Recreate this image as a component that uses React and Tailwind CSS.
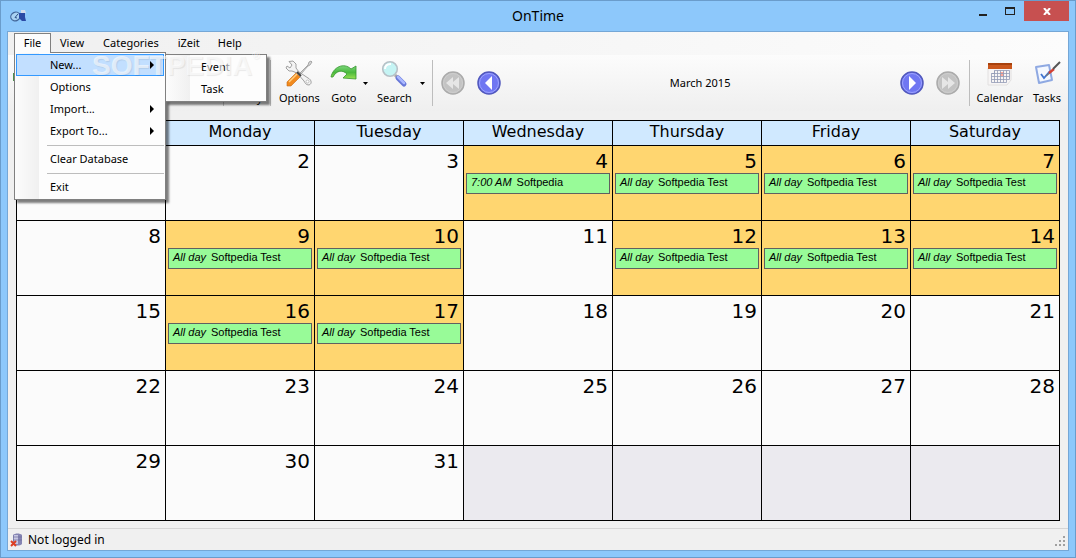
const WEEKDAYS = ["Sunday", "Monday", "Tuesday", "Wednesday", "Thursday", "Friday", "Saturday"];

const EVENTS = {
  4: { time: "7:00 AM", title: "Softpedia" },
  5: { time: "All day", title: "Softpedia Test" },
  6: { time: "All day", title: "Softpedia Test" },
  7: { time: "All day", title: "Softpedia Test" },
  9: { time: "All day", title: "Softpedia Test" },
  10: { time: "All day", title: "Softpedia Test" },
  12: { time: "All day", title: "Softpedia Test" },
  13: { time: "All day", title: "Softpedia Test" },
  14: { time: "All day", title: "Softpedia Test" },
  16: { time: "All day", title: "Softpedia Test" },
  17: { time: "All day", title: "Softpedia Test" },
};

const WEEKS = [0, 1, 2, 3, 4].map((week) => [1, 2, 3, 4, 5, 6, 7].map((day) => week * 7 + day));

const AppIcon = () => (
  <svg width="17" height="14" viewBox="0 0 17 14">
    <ellipse cx="5.5" cy="7.5" rx="4.8" ry="4.3" fill="#a9d2f3" stroke="#44699c" strokeWidth="1.2" transform="rotate(-25 5.500 7.500)" />
    <path d="M5 8.500 8 5M5 8.500l2 .5" stroke="#2c4f86" strokeWidth="1" fill="none" />
    <path d="M11 1h4l1 3-5 1z" fill="#d4dcec" />
    <path d="M9 4h6v4l1 4h-4l-3-3z" fill="#2b49a5" />
  </svg>
);

const ToolsIcon = () => (
  <svg width="28" height="27" viewBox="0 0 28 27">
    <path d="M4 1.500 8 1l3 3v4l3 4 9 6c4 2 4 6 1 7-3 0-4-2-5-4l-7-8-5-2-3 0-3-3 1-2 3 2 2-3z" fill="#f3f3f3" stroke="#a0a0a0" strokeLinejoin="round" />
    <circle cx="22.500" cy="21.500" r="1.500" fill="#fff" stroke="#aaa" strokeWidth=".7" />
    <path d="m15 13 8-8 1-3 2-1 1 1-2 3-2 1-7 8z" fill="#d8d8d8" stroke="#8a8a8a" strokeWidth=".7" />
    <path d="m11 13 4 4-9 9H2v-4z" fill="#f28a1d" stroke="#c56a14" strokeWidth=".6" />
    <path d="m4 22 8-8" stroke="#ffd083" strokeWidth="1.4" />
    <path d="m12 12 4 4" stroke="#404040" strokeWidth="1.8" />
  </svg>
);

const GotoIcon = () => (
  <svg width="28" height="28" viewBox="0 0 28 28">
    <defs>
      <linearGradient id="goto" x2="0" y2="1">
        <stop stopColor="#7bd67c" />
        <stop offset=".5" stopColor="#4ab93d" />
        <stop offset="1" stopColor="#9be252" />
      </linearGradient>
    </defs>
    <path d="M1 17C3 7 14 2 21 9l5-3v13l-13-1 4-4c-5-5-11-3-14 3z" fill="url(#goto)" stroke="#36952f" strokeWidth=".8" strokeLinejoin="round" />
  </svg>
);

const SearchIcon = () => (
  <svg width="28" height="28" viewBox="0 0 28 28">
    <path d="m15 15 3 3" stroke="#aaa" strokeWidth="3" />
    <path d="m18 18 6 6" stroke="#6878d8" strokeWidth="5" strokeLinecap="round" />
    <path d="m18 17 6 6" stroke="#aab8ff" strokeWidth="2.500" strokeLinecap="round" />
    <circle cx="10" cy="9" r="7.300" fill="#c5f4f4" stroke="#b7c1c7" strokeWidth="1.600" />
    <path d="M5 9c0-3 2-5 6-5" stroke="#fff" strokeWidth="2" fill="none" />
  </svg>
);

const CalendarIcon = () => (
  <svg width="26" height="27" viewBox="0 0 26 27">
    <path d="M1 8h23v12l-4 5H1z" fill="#f7f5f5" stroke="#e2e0e0" />
    <path d="M1 3h24v6H1z" fill="#ca571c" />
    <path d="M1 3h24v2H1z" fill="#a8410c" />
    <path d="M13 12h4v4h-4z" fill="#ffa89a" />
    <path d="M7.500 10.500h15v9h-3v3h-15v-9h3zM4.500 13.500h18M4.500 16.500h18M4.500 19.500h15M7.500 10.500v12M10.500 10.500v12M13.500 10.500v12M16.500 10.500v12M19.500 10.500v9" fill="none" stroke="#929bb5" strokeWidth=".8" />
  </svg>
);

const TasksIcon = () => (
  <svg width="28" height="28" viewBox="0 0 28 28">
    <path d="m3 7 13-2 3 15-13 3z" fill="#f4f8ff" stroke="#8fa9e2" strokeWidth="2" strokeLinejoin="round" />
    <path d="m8 14 3 4 6-7" fill="none" stroke="#4175d0" strokeWidth="1.800" />
    <path d="m13 16 5-4" stroke="#777" strokeWidth="1.500" />
    <path d="m16 13 5-4" stroke="#d44032" strokeWidth="2.500" />
    <path d="m20 9 7-7" stroke="#555" strokeWidth="2" />
  </svg>
);

const RoundArrow = ({ disabled, forward, double }) => (
  <svg width="24" height="24" viewBox="0 0 24 24" className={forward ? "" : "rotate-180"}>
    <circle cx="12" cy="12" r="11" fill={disabled ? "#c3c3c3" : "#7077f2"} stroke={disabled ? "#ababab" : "#5158bd"} strokeWidth="1.500" />
    <circle cx="12" cy="12" r="9.500" fill="none" stroke={disabled ? "#cecece" : "#9da3ff"} />
    {double ? (
      <path d="m6 6 6 5V6l7 6-7 6v-5l-6 5z" fill="#e6e6e6" />
    ) : (
      <path d="m9 5 7 7-7 7z" fill="#fff" />
    )}
  </svg>
);

const OfflineIcon = () => (
  <svg width="14" height="14" viewBox="0 0 14 14">
    <path d="M3 2c2-2 7-2 9 0v9c-2 2-7 2-9 0z" fill="#8585b3" />
    <path d="M4 2h4v9H4z" fill="#c8c8e3" />
    <path d="M3 4h9M3 7h9" stroke="#6d6d9c" strokeWidth=".7" />
    <path d="m1 8 5 5M6 8l-5 5" stroke="#dc3e23" strokeWidth="2" />
  </svg>
);

const ToolButton = ({ icon, label }) => (
  <button className="flex h-[46px] flex-col items-center justify-between">
    {icon}
    <span className="leading-4">{label}</span>
  </button>
);

const DropArrow = ({ label }) => (
  <button aria-label={label} className="flex w-3 justify-center">
    <svg width="5" height="3" viewBox="0 0 5 3"><path d="M0 0h5L2.500 3z" /></svg>
  </button>
);

const Separator = () => <div className="h-[46px] w-px bg-[#bdbdbd]" />;

const MenuItem = ({ label, sub, active }) => (
  <button
    className={
      active
        ? "flex h-[22px] w-full items-center border border-[#3399ff] bg-[#c2dfff] pr-[9px] pl-[33px]"
        : "flex h-[22px] w-full items-center pr-[10px] pl-[34px]"
    }
  >
    {label}
    {sub && (
      <svg className="ml-auto" width="4" height="8" viewBox="0 0 4 8"><path d="M0 0l4 4-4 4z" /></svg>
    )}
  </button>
);

const MenuDivider = () => <div className="mt-[3px] mb-[2px] ml-[31px] h-px bg-[#bdbdbd]" />;

const FileMenu = () => (
  <div className="absolute top-full left-0 z-10 -mt-px w-[152px] border border-[#808080] bg-[linear-gradient(90deg,#fcfcfc,#f0f0f0_24px,#fdfdfd_24px)] p-px shadow-[3px_3px_2px_rgba(0,0,0,0.5)]">
    <MenuItem label="New..." sub active />
    <MenuItem label="Options" />
    <MenuItem label="Import..." sub />
    <MenuItem label="Export To..." sub />
    <MenuDivider />
    <MenuItem label="Clear Database" />
    <MenuDivider />
    <MenuItem label="Exit" />
    <div className="absolute top-px left-full w-[102px] border border-[#808080] bg-[linear-gradient(90deg,#fcfcfc,#f0f0f0_24px,#fdfdfd_24px)] p-px shadow-[3px_3px_2px_rgba(0,0,0,0.5)]">
      <MenuItem label="Event" />
      <MenuItem label="Task" />
    </div>
    <div className="pointer-events-none absolute -top-[3px] left-[77px] font-['Liberation_Sans'] text-[28px] leading-8 font-bold text-white/60 [text-shadow:1px_1px_1px_rgba(0,0,0,0.08)]">
      SOFTPEDIA<span className="align-top text-[10px] leading-3">®</span>
    </div>
  </div>
);

const TitleBar = () => (
  <header className="relative flex h-[30px] items-start justify-center">
    <div className="absolute top-2 left-[3px]"><AppIcon /></div>
    <h1 className="text-[14px] leading-[30px]">OnTime</h1>
    <div className="absolute top-0 right-0 flex h-5">
      <button aria-label="Minimize" className="flex w-[26px] items-center justify-center">
        <span className="mt-[7px] h-[2px] w-2 bg-[#222]" />
      </button>
      <button aria-label="Maximize" className="flex w-7 items-center justify-center">
        <span className="h-2 w-[10px] border border-t-2 border-[#222]" />
      </button>
      <button aria-label="Close" className="flex w-[45px] items-center justify-center bg-[#c75050]">
        <svg width="8" height="7" viewBox="0 0 8 7"><path d="m1 0 6 7M7 0 1 7" stroke="#fff" strokeWidth="2" /></svg>
      </button>
    </div>
  </header>
);

const MenuBar = () => (
  <nav className="flex h-[23px] items-start bg-[linear-gradient(90deg,#f0f0f0,#fcfcfc)] pt-px pl-[6px]">
    <div className="relative flex">
      <button className="relative z-20 h-5 w-[37px] border border-b-0 border-[#808080] bg-[#fcfcfc]">File</button>
      <FileMenu />
    </div>
    <button className="h-5 px-[9px]">View</button>
    <button className="h-5 px-[10px]">Categories</button>
    <button className="h-5 px-[9px]">iZeit</button>
    <button className="h-5 px-[9px]">Help</button>
  </nav>
);

const Toolbar = () => (
  <div className="flex h-[56px] items-center justify-between bg-[linear-gradient(#fcfcfc,#efefef)] pr-[7px]">
    <div className="flex items-center">
      <div className="flex w-[215px] items-center pl-[5px]"><span className="mb-3 h-2 w-2 bg-[#4c8f4c]" /></div>
      <Separator />
      <div className="flex w-[46px] justify-center"><ToolButton icon={<CalendarIcon />} label="Today" /></div>
      <Separator />
      <div className="ml-2 flex items-center">
        <ToolButton icon={<ToolsIcon />} label="Options" />
        <div className="ml-[10px]"><ToolButton icon={<GotoIcon />} label="Goto" /></div>
        <div className="ml-[2px]"><DropArrow label="Goto menu" /></div>
        <div className="ml-[5px]"><ToolButton icon={<SearchIcon />} label="Search" /></div>
        <div className="ml-[5px]"><DropArrow label="Search menu" /></div>
      </div>
      <div className="mr-2 ml-[3px]"><Separator /></div>
      <button aria-label="Previous year"><RoundArrow disabled double /></button>
      <button aria-label="Previous month" className="ml-3"><RoundArrow /></button>
    </div>
    <h2>March 2015</h2>
    <div className="flex items-center">
      <button aria-label="Next month"><RoundArrow forward /></button>
      <button aria-label="Next year" className="ml-3"><RoundArrow forward disabled double /></button>
      <div className="mr-[7px] ml-[9px]"><Separator /></div>
      <ToolButton icon={<CalendarIcon />} label="Calendar" />
      <div className="ml-[10px]"><ToolButton icon={<TasksIcon />} label="Tasks" /></div>
    </div>
  </div>
);

const DayCell = ({ day }) => {
  const event = EVENTS[day];

  if (day > 31) return <td className="border border-black bg-[#ebeaef]" />;

  return (
    <td className={`border border-black p-0 align-top ${event ? "bg-[#ffd670]" : "bg-[#fbfbfb]"}`}>
      <div className="h-[27px] pr-1 text-right font-['DejaVu_Sans'] text-[20px] leading-[30px]">{day}</div>
      {event && (
        <div className="mx-[2px] h-[21px] overflow-hidden border border-[#606060] bg-[#98fb98] pl-1 font-['Liberation_Sans'] text-[11px] leading-[17px] whitespace-nowrap">
          <i className="mr-[5px]">{event.time}</i>
          {event.title}
        </div>
      )}
    </td>
  );
};

const MonthTable = () => (
  <table className="w-full table-fixed border-collapse">
    <thead>
      <tr className="h-[25px] bg-[#d0e9ff] font-['DejaVu_Sans'] text-[16px] leading-5">
        {WEEKDAYS.map((name) => (
          <th key={name} className="border border-black p-0 pb-[2px] font-normal">{name}</th>
        ))}
      </tr>
    </thead>
    <tbody>
      {WEEKS.map((week) => (
        <tr key={week[0]} className="h-[75px]">
          {week.map((day) => <DayCell key={day} day={day} />)}
        </tr>
      ))}
    </tbody>
  </table>
);

const StatusBar = () => (
  <footer className="flex h-[22px] items-center border-t border-[#d5d5d5] pl-[2px] text-[12px]">
    <OfflineIcon />
    <span className="ml-1">Not logged in</span>
    <svg className="mt-1 mr-[2px] ml-auto" width="11" height="11" viewBox="0 0 11 11" fill="#a0a0a0">
      <path d="M8 0h2v2H8zM4 4h2v2H4zM8 4h2v2H8zM0 8h2v2H0zM4 8h2v2H4zM8 8h2v2H8z" />
    </svg>
  </footer>
);

export default function App() {
  return (
    <div className="flex min-h-screen flex-col border border-[#6a9ccb] bg-[#8dc8fb] px-[6px] pb-[6px] font-['Noto_Sans',sans-serif] text-[11px] text-black">
      <TitleBar />
      <div className="flex flex-1 flex-col border border-[#75a7d6] bg-[#f0f0f0]">
        <MenuBar />
        <Toolbar />
        <main className="flex-1 pt-[9px] pr-2 pl-2">
          <MonthTable />
        </main>
        <StatusBar />
      </div>
    </div>
  );
}
